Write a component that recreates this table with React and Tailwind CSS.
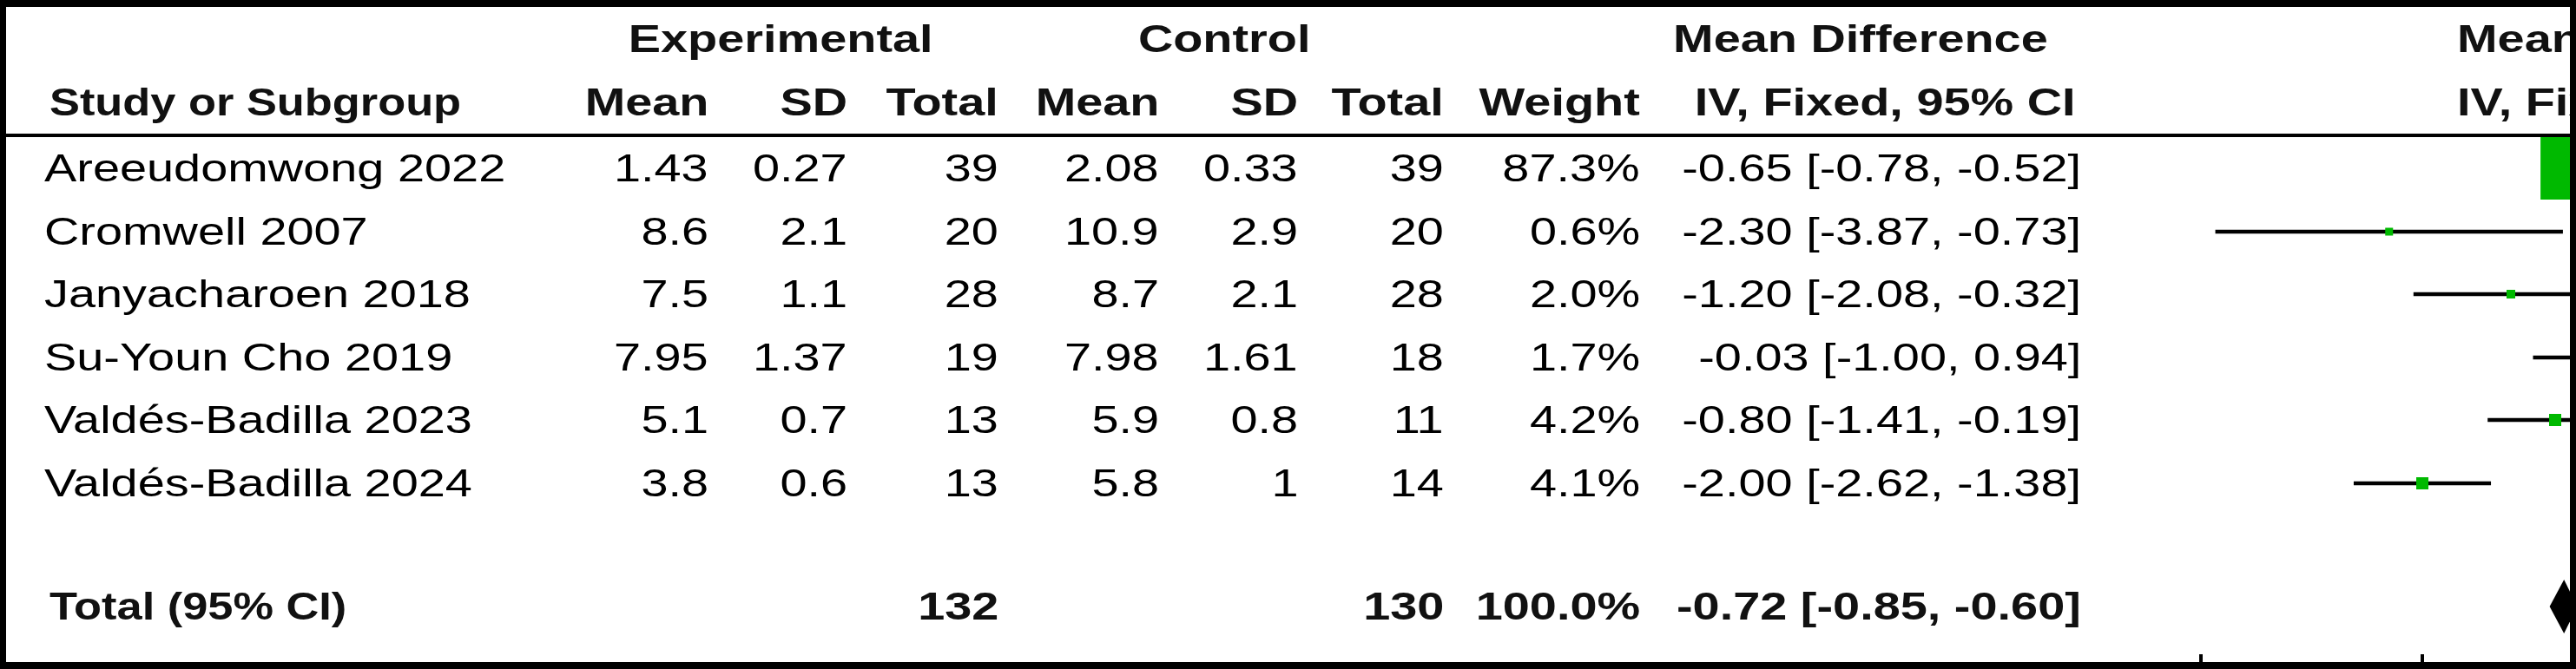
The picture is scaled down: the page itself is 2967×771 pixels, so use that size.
import React from "react";

const rows = [
  { study: "Areeudomwong 2022", m1: "1.43", sd1: "0.27", n1: "39", m2: "2.08", sd2: "0.33", n2: "39", w: "87.3%", ci: "-0.65 [-0.78, -0.52]", est: -0.65, lo: -0.78, hi: -0.52, size: 72 },
  { study: "Cromwell 2007", m1: "8.6", sd1: "2.1", n1: "20", m2: "10.9", sd2: "2.9", n2: "20", w: "0.6%", ci: "-2.30 [-3.87, -0.73]", est: -2.3, lo: -3.87, hi: -0.73, size: 9 },
  { study: "Janyacharoen 2018", m1: "7.5", sd1: "1.1", n1: "28", m2: "8.7", sd2: "2.1", n2: "28", w: "2.0%", ci: "-1.20 [-2.08, -0.32]", est: -1.2, lo: -2.08, hi: -0.32, size: 10 },
  { study: "Su-Youn Cho 2019", m1: "7.95", sd1: "1.37", n1: "19", m2: "7.98", sd2: "1.61", n2: "18", w: "1.7%", ci: "-0.03 [-1.00, 0.94]", est: -0.03, lo: -1.0, hi: 0.94, size: 10 },
  { study: "Valdés-Badilla 2023", m1: "5.1", sd1: "0.7", n1: "13", m2: "5.9", sd2: "0.8", n2: "11", w: "4.2%", ci: "-0.80 [-1.41, -0.19]", est: -0.8, lo: -1.41, hi: -0.19, size: 14 },
  { study: "Valdés-Badilla 2024", m1: "3.8", sd1: "0.6", n1: "13", m2: "5.8", sd2: "1", n2: "14", w: "4.1%", ci: "-2.00 [-2.62, -1.38]", est: -2.0, lo: -2.62, hi: -1.38, size: 14 },
];

const cols =
  "grid grid-cols-[693px_116px_160px_174px_185px_160px_168px_226px_508px_563px]";

// plot cell x for a mean difference (ticks at -4 and -2 are 255px apart)
const px = (v) => 648 + 127.5 * v;

// the source picture is stretched sideways, so every text run is widened
function T({ children, align = "right", narrow = false }) {
  const origin =
    align === "left" ? "origin-left" : align === "center" ? "origin-center" : "origin-right";
  const scale = narrow ? "scale-x-[1.19]" : "scale-x-[1.27]";
  return (
    <span className={`inline-block whitespace-nowrap ${scale} ${origin}`}>{children}</span>
  );
}

function Num({ v }) {
  return (
    <div className="flex items-center justify-end">
      <T>{v}</T>
    </div>
  );
}

function StudyRow({ r }) {
  return (
    <div className={`${cols} h-[72.5px]`}>
      <div className="flex items-center pl-[44px]">
        <T align="left">{r.study}</T>
      </div>
      {[r.m1, r.sd1, r.n1, r.m2, r.sd2, r.n2, r.w, r.ci].map((v, i) => (
        <Num key={i} v={v} />
      ))}
      <div>
        <svg width="563" height="72.5" className="block">
          <line x1={px(r.lo)} x2={px(r.hi)} y1="36" y2="36" stroke="#000" strokeWidth="4.5" />
          <rect
            x={px(r.est) - r.size / 2}
            y={36 - r.size / 2}
            width={r.size}
            height={r.size}
            fill="#00b900"
          />
        </svg>
      </div>
    </div>
  );
}

export default function App() {
  return (
    <div className="w-[2967px] h-[771px] bg-white border-black border-t-8 border-b-8 border-l-[7px] border-r-[7px] overflow-hidden flex flex-col text-[44px] text-black font-['Liberation_Sans',Arial,sans-serif]">
      {/* group headings */}
      <div className={`${cols} h-[73px] font-bold text-[#111]`}>
        <div />
        <div className="col-span-3 flex items-center justify-center pr-[52px]">
          <T align="center">Experimental</T>
        </div>
        <div className="col-span-3 flex items-center justify-center pl-[8px]">
          <T align="center">Control</T>
        </div>
        <div />
        <div className="flex items-center justify-center">
          <T align="center">Mean Difference</T>
        </div>
        <div className="flex items-center pl-[433px]">
          <T align="left">Mean Difference</T>
        </div>
      </div>

      {/* column headings */}
      <div className={`${cols} h-[73px] font-bold text-[#111]`}>
        <div className="flex items-center pl-[50px]">
          <T align="left" narrow>
            Study or Subgroup
          </T>
        </div>
        {["Mean", "SD", "Total", "Mean", "SD", "Total", "Weight"].map((h, i) => (
          <Num key={i} v={h} />
        ))}
        <div className="flex items-center justify-end pr-[6px]">
          <T>IV, Fixed, 95% CI</T>
        </div>
        <div className="flex items-center pl-[433px]">
          <T align="left">IV, Fixed, 95% CI</T>
        </div>
      </div>

      <div className="h-1 bg-black" />

      {rows.map((r) => (
        <StudyRow key={r.study} r={r} />
      ))}

      <div className="h-[70px]" />

      {/* pooled estimate */}
      <div className={`${cols} h-[72px] font-bold text-[#111]`}>
        <div className="flex items-center pl-[50px]">
          <T align="left" narrow>
            Total (95% CI)
          </T>
        </div>
        <div />
        <div />
        <Num v="132" />
        <div />
        <div />
        <Num v="130" />
        <Num v="100.0%" />
        <Num v="-0.72 [-0.85, -0.60]" />
        <div>
          <svg width="563" height="72" className="block">
            <polygon
              points={`${px(-0.85)},36 ${px(-0.72)},5 ${px(-0.6)},36 ${px(-0.72)},67`}
              fill="#000"
            />
          </svg>
        </div>
      </div>

      {/* axis ticks */}
      <div className={`${cols} flex-1`}>
        <div className="col-span-9" />
        <div className="relative">
          <svg width="563" height="28" className="absolute bottom-0 left-0">
            <rect x="136" y="19" width="4" height="9" fill="#000" />
            <rect x="391" y="19" width="4" height="9" fill="#000" />
          </svg>
        </div>
      </div>
    </div>
  );
}
